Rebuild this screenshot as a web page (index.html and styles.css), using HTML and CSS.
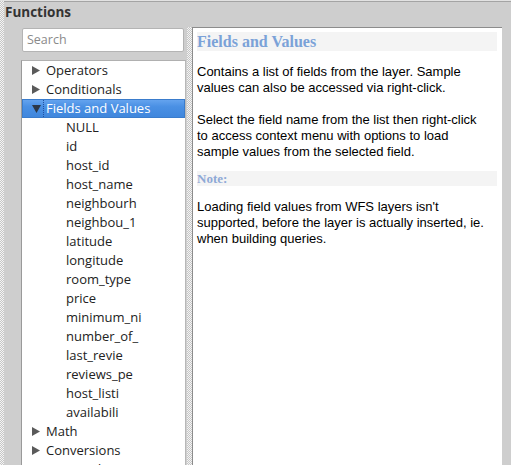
FILE: index.html
```html
<!DOCTYPE html>
<html>
<head>
<meta charset="utf-8">
<link rel="stylesheet" href="styles.css">
</head>
<body>
<div class="window">
  <div class="edge"></div>
  <div class="main">
    <div class="title">Functions</div>
    <div class="content">
      <div class="leftcol">
        <div class="search">Search</div>
        <div class="tree">
          <div class="row"><svg class="arrow" viewBox="0 0 8 9"><polygon points="0,0 8,4.5 0,9"/></svg><span class="label">Operators</span></div>
          <div class="row"><svg class="arrow" viewBox="0 0 8 9"><polygon points="0,0 8,4.5 0,9"/></svg><span class="label">Conditionals</span></div>
          <div class="row selected"><svg class="arrow down" viewBox="0 0 9 8"><polygon points="0,0 9,0 4.5,8"/></svg><span class="label focus">Fields and Values</span></div>
          <div class="row child"><span class="label">NULL</span></div>
          <div class="row child"><span class="label">id</span></div>
          <div class="row child"><span class="label">host_id</span></div>
          <div class="row child"><span class="label">host_name</span></div>
          <div class="row child"><span class="label">neighbourh</span></div>
          <div class="row child"><span class="label">neighbou_1</span></div>
          <div class="row child"><span class="label">latitude</span></div>
          <div class="row child"><span class="label">longitude</span></div>
          <div class="row child"><span class="label">room_type</span></div>
          <div class="row child"><span class="label">price</span></div>
          <div class="row child"><span class="label">minimum_ni</span></div>
          <div class="row child"><span class="label">number_of_</span></div>
          <div class="row child"><span class="label">last_revie</span></div>
          <div class="row child"><span class="label">reviews_pe</span></div>
          <div class="row child"><span class="label">host_listi</span></div>
          <div class="row child"><span class="label">availabili</span></div>
          <div class="row"><svg class="arrow" viewBox="0 0 8 9"><polygon points="0,0 8,4.5 0,9"/></svg><span class="label">Math</span></div>
          <div class="row"><svg class="arrow" viewBox="0 0 8 9"><polygon points="0,0 8,4.5 0,9"/></svg><span class="label">Conversions</span></div>
          <div class="row"><svg class="arrow" viewBox="0 0 8 9"><polygon points="0,0 8,4.5 0,9"/></svg><span class="label">Date and Time</span></div>
        </div>
      </div>
      <div class="splitter"></div>
      <div class="help">
        <h1 class="heading">Fields and Values</h1>
        <p class="para">Contains a list of fields from the layer. Sample values can also be accessed via right-click.</p>
        <p class="para gap">Select the field name from the list then right-click to access context menu with options to load sample values from the selected field.</p>
        <h2 class="note">Note:</h2>
        <p class="para">Loading field values from WFS layers isn't supported, before the layer is actually inserted, ie. when building queries.</p>
      </div>
    </div>
  </div>
</div>
</body>
</html>
```
FILE: styles.css
```css
html, body {
  margin: 0;
  padding: 0;
  height: 100%;
  overflow: hidden;
}
body {
  background: #cecece;
  font-family: "Open Sans", "Noto Sans", sans-serif;
}
.window {
  display: flex;
  height: 465px;
  border-top: 1px solid #e2e2e2;
  box-shadow: inset 0 1px 0 #a4a4a4;
  box-sizing: border-box;
}
.edge {
  width: 4px;
  flex: none;
  background-color: #c8c8c8;
  background-image: repeating-conic-gradient(#f4f4f4 0 25%, #c6c6c6 0 50%);
  background-size: 2px 2px;
}
.main {
  flex: 1;
  display: flex;
  flex-direction: column;
  min-width: 0;
}
.title {
  font-weight: bold;
  font-size: 13.5px;
  color: #333333;
  height: 26px;
  line-height: 22px;
  padding-left: 1px;
  flex: none;
}
.content {
  flex: 1;
  display: flex;
  min-height: 0;
}
.leftcol {
  width: 165px;
  margin-left: 17px;
  flex: none;
  display: flex;
  flex-direction: column;
}
.search {
  margin: 1px 0 0 1px;
  width: 162px;
  height: 24px;
  box-sizing: border-box;
  background: #ffffff;
  border: 1px solid #b4b4b4;
  border-radius: 2px;
  font-size: 12.5px;
  color: #8a8a8a;
  padding-left: 4px;
  line-height: 22px;
}
.tree {
  margin-top: 8px;
  flex: 1;
  background: #ffffff;
  border-left: 1px solid #9a9a9a;
  border-top: 1px solid #b0b0b0;
  border-right: 1px solid #b8b8b8;
  overflow: hidden;
}
.row {
  height: 19px;
  display: flex;
  align-items: center;
  font-size: 13px;
  color: #222222;
  white-space: nowrap;
}
.arrow {
  width: 8px;
  height: 9px;
  margin-left: 10px;
  margin-right: 6px;
  fill: #5a5a5a;
  flex: none;
}
.arrow.down {
  width: 9px;
  height: 8px;
  margin-left: 10px;
  margin-right: 5px;
  fill: #2c3848;
}
.child .label {
  margin-left: 44px;
}
.label {
  line-height: 17px;
  padding: 0 2px 0 0;
}
.selected {
  background: linear-gradient(#68a6f0, #4a90e4 40%, #3f86dc);
  box-shadow: inset 0 0 0 1px #3a7ccc;
  color: #ffffff;
}
.focus {
  border-left: 1px dotted #2050a0;
  padding-left: 2px;
  margin-left: -3px;
}
.splitter {
  width: 5px;
  flex: none;
  margin-left: 1px;
  background-color: #c8c8c8;
  background-image: repeating-conic-gradient(#f4f4f4 0 25%, #c6c6c6 0 50%);
  background-size: 2px 2px;
}
.help {
  width: 310px;
  flex: none;
  background: #ffffff;
  border-left: 1px solid #8c8c8c;
  border-top: 1px solid #8c8c8c;
  box-sizing: border-box;
  padding: 4px 5px 0 4px;
  font-family: "Liberation Sans", Arial, sans-serif;
  font-size: 13px;
  color: #000000;
}
.heading {
  margin: 0;
  background: #f4f4f4;
  font-family: "Liberation Serif", "Times New Roman", serif;
  font-weight: bold;
  font-size: 16px;
  color: #7ba2d8;
  height: 19px;
  line-height: 20px;
}
.para {
  margin: 13px 7px 0 0;
  line-height: 16px;
}
.para.gap {
  margin-top: 16px;
}
.note {
  margin: 11px 0 0 0;
  background: #f4f4f4;
  font-family: "Liberation Serif", "Times New Roman", serif;
  font-weight: bold;
  font-size: 13px;
  color: #8ea9d6;
  height: 15px;
  line-height: 16px;
}
```
